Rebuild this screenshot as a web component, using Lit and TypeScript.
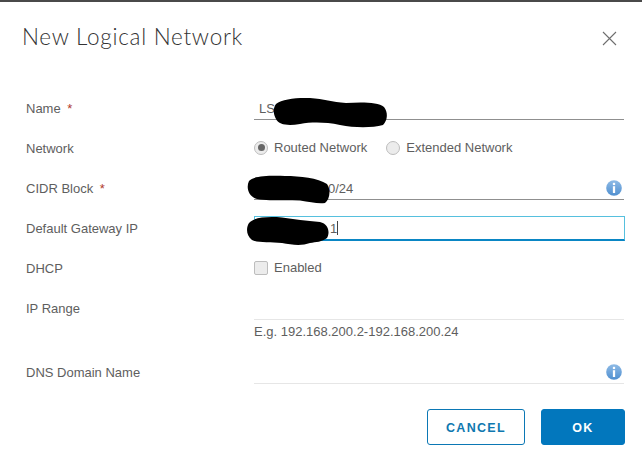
import { LitElement, html, css, svg } from "lit";
import { customElement } from "lit/decorators.js";

const info = html`<svg class="info" width="16" height="16" viewBox="0 0 17 17">
  <defs><linearGradient id="ig" x1="0" y1="0" x2="0" y2="1"><stop offset="0" stop-color="#8fbbe6"/><stop offset="1" stop-color="#4f8fd0"/></linearGradient></defs>
  <circle cx="8.5" cy="8.5" r="8.3" fill="url(#ig)"/>
  <rect x="7.3" y="3" width="2.4" height="2.4" fill="#fff"/>
  <rect x="7.3" y="6.6" width="2.4" height="7.2" fill="#fff"/>
</svg>`;

@customElement("app-root")
export class AppRoot extends LitElement {
  static styles = css`
    :host { display: block; position: relative; width: 642px; height: 452px; overflow: hidden; background: #fff;
      font-family: "Liberation Sans", Arial, sans-serif; font-size: 13px; color: #5e5e5e; box-sizing: border-box; }
    .dialog { border-top: 2px solid #4a4a4a; height: 450px; display: flex; flex-direction: column; }
    .head { display: flex; justify-content: space-between; align-items: flex-start; padding: 20px 25px 0 22px; height: 87px; box-sizing: border-box; }
    h1 { margin: 0; font: 300 22.5px/30px Lato, sans-serif; color: #333; letter-spacing: 0.72px; }
    .close { margin-top: 9px; display: block; }
    .form { display: flex; flex-direction: column; padding-left: 26px; padding-right: 18px; }
    .row { display: grid; grid-template-columns: 228px 1fr; height: 40px; }
    .label { line-height: 16px; padding-top: 12px; }
    .req { color: #b0392b; margin-left: 3px; }
    .field { position: relative; box-sizing: border-box; height: 31px; display: flex; align-items: center; justify-content: space-between; padding: 8px 0 0 0; border-bottom: 1px solid #8f8f8f; }
    .field.text { padding-left: 5px; }
    .info { margin-right: 2px; display: block; }
    .choices { display: flex; align-items: center; height: 22px; margin-top: 7px; }
    .choice { display: flex; align-items: center; gap: 6px; margin-right: 19px; }
    .radio { width: 14px; height: 14px; margin-top: 1px; border-radius: 50%; border: 1px solid #bdbdbd; background: #ececec; box-sizing: border-box; display: flex; align-items: center; justify-content: center; }
    .radio.on i { display: block; width: 7px; height: 7px; border-radius: 50%; background: #666; }
    .check { width: 14px; height: 14px; margin-top: 1px; border-radius: 2px; border: 1px solid #bdbdbd; background: #ececec; box-sizing: border-box; }
    .focus { box-sizing: border-box; height: 25px; margin-top: 7px; margin-right: -1px; border: 1px solid #56c0de; border-bottom: 2px solid #0a86c4; display: flex; align-items: center; }
    .focus-in { width: 100%; padding-left: 75px; display: flex; align-items: center; box-sizing: border-box; }
    .caret { width: 1px; height: 14px; background: #444; margin-left: 0; }
    .light { border-bottom-color: #e6e6e6; }
    .range { height: 64px; }
    .hint { margin-top: 4px; line-height: 15px; }
    .dns { height: 31px; }
    .dns .label { padding-top: 12px; }
    .foot { display: flex; justify-content: flex-end; gap: 16px; padding: 25px 17px 0 0; }
    button { height: 36px; border-radius: 3px; font: 700 12.5px "Liberation Sans", Arial, sans-serif; letter-spacing: 1.3px; box-sizing: border-box; padding: 1px 0 0; }
    .cancel { width: 98px; background: #fff; border: 1px solid #0b78b5; color: #0f78b0; }
    .ok { width: 84px; background: #0277bd; border: 1px solid #0277bd; color: #fff; }
    .redact { position: absolute; left: 0; top: 0; pointer-events: none; }
  `;
  render() {
    return html`
      <div class="dialog">
        <div class="head">
          <h1>New Logical Network</h1>
          <svg class="close" width="15" height="15" viewBox="0 0 15 15"><path d="M1 1 L14 14 M14 1 L1 14" stroke="#6e6e6e" stroke-width="1.1" fill="none"/></svg>
        </div>
        <div class="form">
          <div class="row"><div class="label">Name <span class="req">*</span></div><div class="field text"><span>LS</span></div></div>
          <div class="row"><div class="label">Network</div>
            <div class="choices">
              <label class="choice"><span class="radio on"><i></i></span>Routed Network</label>
              <label class="choice"><span class="radio"></span>Extended Network</label>
            </div></div>
          <div class="row"><div class="label">CIDR Block <span class="req">*</span></div><div class="field text"><span style="padding-left:69px">0/24</span>${info}</div></div>
          <div class="row"><div class="label">Default Gateway IP</div><div class="focus"><div class="focus-in"><span>1</span><span class="caret"></span></div></div></div>
          <div class="row"><div class="label">DHCP</div><div class="choices"><label class="choice"><span class="check"></span>Enabled</label></div></div>
          <div class="row range"><div class="label">IP Range</div><div><div class="field light"></div><div class="hint">E.g. 192.168.200.2-192.168.200.24</div></div></div>
          <div class="row dns"><div class="label">DNS Domain Name</div><div class="field light"><span></span>${info}</div></div>
        </div>
        <div class="foot">
          <button class="cancel">CANCEL</button>
          <button class="ok">OK</button>
        </div>
      </div>
      <svg class="redact" width="642" height="452" viewBox="0 0 642 452">
        ${svg`<path fill="#000" d="M276 104 C282 99 296 97.5 310 98 C324 99 332 102 346 103 C362 102 378 102 384 107 C388 112 388 120 383 125 C372 128 355 128 340 125 C325 122 312 122 300 124 C288 126 279 125 276 119 C273 114 273 108 276 104Z"/>
        <path fill="#000" d="M249 181 C253 176 268 175.5 285 176 C300 176 318 178 327 184 C331 190 330 199 325 203 C318 204 310 202 300 200.5 C285 200 268 201 257 199 C248 196 246 187 249 181Z"/>
        <path fill="#000" d="M249 223 C254 217 268 216.5 282 217.5 C294 219 306 221 320 222 C329 224 330 233 327 238 C322 242 316 242 310 243 C302 246 292 245 282 243 C270 242 258 243 252 240 C246 235 246 228 249 223Z"/>`}
      </svg>
    `;
  }
}
